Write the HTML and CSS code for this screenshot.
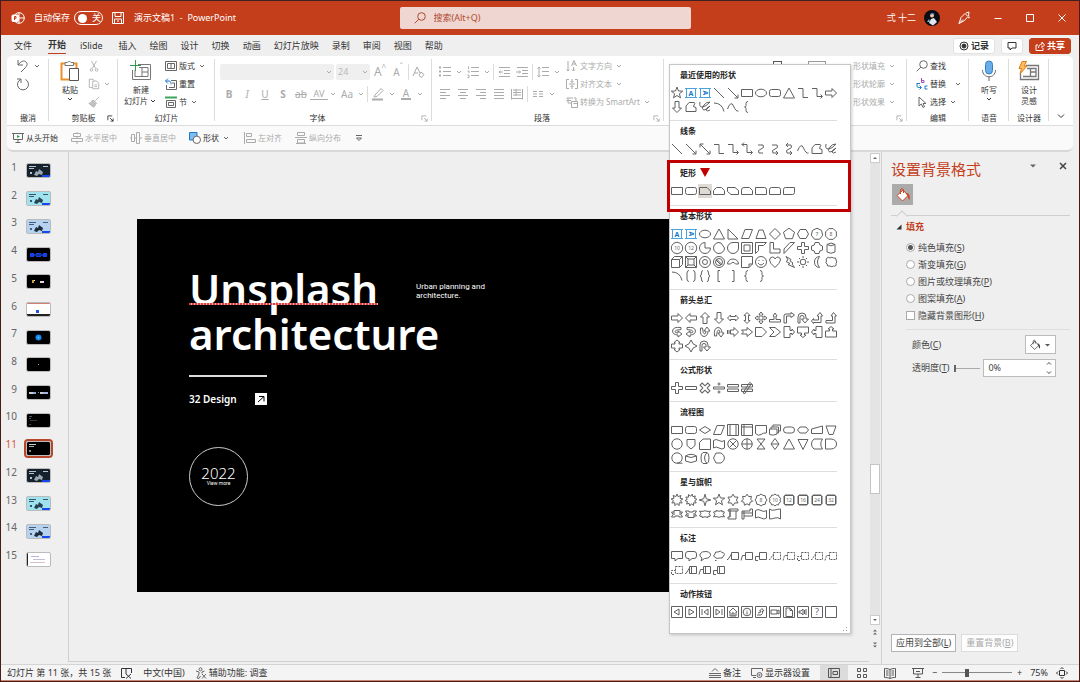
FILE: index.html
```html
<!DOCTYPE html>
<html lang="zh-CN">
<head>
<meta charset="utf-8">
<title>演示文稿1 - PowerPoint</title>
<link rel="stylesheet" href="styles.css">
</head>
<body>
<svg class="sprite" aria-hidden="true">
  <symbol id="caret" viewBox="0 0 8 8"><path d="M2 3l2 2 2-2"/></symbol>
  <symbol id="undo" viewBox="0 0 14 14"><path d="M2 1v5h5M2 6C5 2 8 1 10 3c2 2 1 4-1 6l-4 4"/></symbol>
  <symbol id="redo" viewBox="0 0 14 14"><path d="M1 2h4v4M4.500 2.500A5.500 5.500 0 1 0 9.500 2.500"/></symbol>
  <symbol id="paste" viewBox="0 0 20 22"><path d="M6 3.500H1.500V19.500H9M13.500 3.500H16.500V8" stroke="#e8912d" stroke-width="2"/><path d="M5 2.500H7.500A2 2 0 0 1 11 2.500H13.500V5.500H5Z" fill="#fff" stroke="#777"/><path d="M9.500 8.500H18.500V20.500H9.500Z" fill="#fff" stroke="#555"/></symbol>
  <symbol id="cut" viewBox="0 0 14 14"><path d="M4 1l5 9M10 1l-5 9"/><circle cx="4" cy="11.500" r="1.500"/><circle cx="10" cy="11.500" r="1.500"/></symbol>
  <symbol id="copy" viewBox="0 0 14 14"><path d="M5 11H1.500V1.500H6L7 3M5.500 3.500H10L12.500 6V12.500H5.500ZM7.500 8h3M7.500 10h3"/></symbol>
  <symbol id="brush" viewBox="0 0 14 14"><path d="M13 1L8.500 5.500M6 4.500L10 8.500 8.500 10 4.500 6ZM4.500 6C4 7.500 3 8 1 8.500L6.500 13C8 12.500 8.500 11 8.500 10M3 10l2-1M5 12l1.500-2" fill="#ccc"/></symbol>
  <symbol id="newslide" viewBox="0 0 22 22"><path d="M8 4.500H20.500V19.500H2.500V10M5 16.500H18V7.500H9M5 10V17M12 7.500V16.500M12 12H18" stroke="#777"/><path d="M5.500 0V11M0 5.500H11" stroke="#2c9b50"/></symbol>
  <symbol id="layout" viewBox="0 0 12 12"><path d="M.5 1.500H11.500V10.500H.5ZM2.500 3.500H9.500V8.500H2.500ZM6 3.500V8.500"/></symbol>
  <symbol id="reset" viewBox="0 0 12 12"><path d="M6 2.500H11.500V11.500H1.500V7M4 9.500H9.500V5H7"/><path d="M3 .5L.5 3 3 5.500M.5 3H4C6 3 6 5 6 6.500" stroke="#1c78c8"/></symbol>
  <symbol id="section" viewBox="0 0 12 12"><path d="M1.500 4.500H10.500V11.500H1.500ZM3.500 6.500H8.500V9.500H3.500Z"/><path d="M0 1.500H12" stroke="#3ca55c" stroke-width="2"/></symbol>
  <symbol id="launch" viewBox="0 0 8 8"><path d="M1 6V1H6M3.500 3.500L7 7M7 4V7H4"/></symbol>
  <symbol id="clear" viewBox="0 0 14 14"><path d="M1 11L5 2 8 8M2.500 8H6M9 7L12 9.500 9.500 12.500 7 10.500Z"/></symbol>
  <symbol id="pen" viewBox="0 0 14 14"><path d="M4 8L10 1.500 12 3.500 6 9.500 3 10Z"/><path d="M1 12.500H12" stroke-width="2"/></symbol>
  <symbol id="bullets" viewBox="0 0 12 12"><path d="M4 1.500H12M4 5.500H12M4 9.500H12"/><path d="M0 1.500H2M0 5.500H2M0 9.500H2" stroke-width="2"/></symbol>
  <symbol id="numbers" viewBox="0 0 12 12"><path d="M4 1.500H12M4 5.500H12M4 9.500H12M1.500 .5V3M.5 5H2V7M.5 9H2V11.500H.5"/></symbol>
  <symbol id="outdent" viewBox="0 0 12 12"><path d="M1 1.500H12M6 4.500H12M6 7.500H12M1 10.500H12M5 6H1M2.500 4.500L1 6 2.500 7.500"/></symbol>
  <symbol id="indent" viewBox="0 0 12 12"><path d="M1 1.500H12M6 4.500H12M6 7.500H12M1 10.500H12M0 6H4.500M3 4.500L4.500 6 3 7.500"/></symbol>
  <symbol id="spacing" viewBox="0 0 12 12"><path d="M5 1.500H12M5 5.500H12M5 9.500H12M2 1V11M.5 2.500L2 1 3.500 2.500M.5 9.500L2 11 3.500 9.500"/></symbol>
  <symbol id="al" viewBox="0 0 12 12"><path d="M1 1.500H11M1 4.500H7M1 7.500H11M1 10.500H7"/></symbol>
  <symbol id="ac" viewBox="0 0 12 12"><path d="M1 1.500H11M3 4.500H9M1 7.500H11M3 10.500H9"/></symbol>
  <symbol id="ar" viewBox="0 0 12 12"><path d="M1 1.500H11M5 4.500H11M1 7.500H11M5 10.500H11"/></symbol>
  <symbol id="aj" viewBox="0 0 12 12"><path d="M1 1.500H11M1 4.500H11M1 7.500H11M1 10.500H11"/></symbol>
  <symbol id="ad" viewBox="0 0 12 12"><path d="M.5 1V11.500M11.500 1V11.500M.5 10.500H11.500M2 2H10M2 4.500H10M2 7H10M5 1V8"/></symbol>
  <symbol id="cols" viewBox="0 0 12 12"><path d="M1 3.500H5M1 6H5M1 8.500H5M7 3.500H11M7 6H11M7 8.500H11"/></symbol>
  <symbol id="tdir" viewBox="0 0 12 12"><path d="M2 1V11M.5 9.500L2 11 3.500 9.500M7.500 11V7M6 9.500L7.500 11 9 9.500M5.500 6L8 .5 10.500 6M6.500 4H9.500"/></symbol>
  <symbol id="talign" viewBox="0 0 12 12"><path d="M3 1.500H.5V10.500H3M9 1.500H11.500V10.500H9M3 6H9M6 1V4.500M6 7.500V11M4.500 3L6 4.500 7.500 3M4.500 9L6 7.500 7.500 9"/></symbol>
  <symbol id="smart" viewBox="0 0 12 12"><path d="M.5 2H7M.5 4.500H5M2 2V7H5M5.500 5.500H11.500V11.500H5.500ZM7.500 7.500H11.500M8 2H10V5"/></symbol>
  <symbol id="find" viewBox="0 0 12 12"><circle cx="7.500" cy="4.500" r="3.800"/><path d="M4.800 7.200L.7 11.300"/></symbol>
  <symbol id="replace" viewBox="0 0 12 12"><path d="M5.500 0V4.500M5.500 2.500H8V4.500H5.500" stroke="#a54bc0"/><path d="M11.500 8H9V11H11.500M1 5V8C1 9.500 2 9.500 5 9.500M3.500 7.500L5.500 9.500 3.500 11.500M4 5.500H1" stroke="#1c78c8"/></symbol>
  <symbol id="select" viewBox="0 0 12 12"><path d="M3 1V10L5.300 8 7 11.500 8.500 10.800 7 7.500H10Z"/></symbol>
  <symbol id="mic" viewBox="0 0 16 22"><rect x="4.500" y="1" width="7" height="13" rx="3.500" fill="#69aee8" stroke="#2f7fc4"/><path d="M1.500 10C1.500 19 14.500 19 14.500 10M8 17V21" stroke="#666"/></symbol>
  <symbol id="ideas" viewBox="0 0 22 20"><path d="M8 4.500H20.500V18.500H2.500V13M9 7.500H18V15.500H5M12.500 7.500V15.500M12.500 11H18" stroke="#777" stroke-width="1.300"/><path d="M4 .5H8.500L6 5H9L2 13 3.500 7.500H1Z" fill="#f9bf62" stroke="#e07b12"/></symbol>
  <symbol id="play" viewBox="0 0 12 12"><path d="M0 1.500H12M1.500 1.500V7.500H10.500V1.500M6 7.500V11M3.500 10.500H8.500"/><path d="M5 3L8 4.500 5 6Z" fill="#2c9b50" stroke="none"/></symbol>
  <symbol id="hc" viewBox="0 0 12 12"><path d="M6 0V1.500M2.500 1.500H9.500V4.500H2.500ZM6 4.500V6.500M.5 6.500H11.500V9.500H.5ZM6 9.500V12"/></symbol>
  <symbol id="vc" viewBox="0 0 12 12"><path d="M0 6H1.500M1.500 2.500H4.500V9.500H1.500ZM4.500 6H6.500M6.500 .5H9.500V11.500H6.500ZM9.500 6H12"/></symbol>
  <symbol id="shapes" viewBox="0 0 12 12"><path d="M.5 .5H8V8H.5Z" fill="#80bdec" stroke="#1c78c8"/><circle cx="7.800" cy="7.800" r="3.700" fill="#fff"/></symbol>
  <symbol id="left" viewBox="0 0 12 12"><path d="M.5 0V12M2.500 1.500H7.500V4.500H2.500ZM2.500 7.500H11.500V10.500H2.500Z"/></symbol>
  <symbol id="dist" viewBox="0 0 12 12"><path d="M0 5.500H12M2.500 .5H9.500V3.500H2.500ZM2.500 7.500H9.500V11H2.500ZM1 11.500H11"/></symbol>
  <symbol id="bucket" viewBox="0 0 16 16"><path d="M2 8.500L8 3 13 8.500 7.500 14Z" fill="#fff"/><path d="M5.500 7V2.500Q7 .5 8.500 2.500V6"/><path d="M12 6C14 6.500 15.500 9 14.500 13 13 12 13 9 11 6Z" class="drop"/></symbol>
  <symbol id="book" viewBox="0 0 12 12"><path d="M6 2.500C4 1.500 2 1.500 .5 1.500V10.500C2 10.500 4 10.500 6 11.500 8 10.500 10 10.500 11.500 10.500V1.500C10 1.500 8 1.500 6 2.500V11M2 4H4.500M2 6H4.500M2 8H4.500M7.500 4H10M7.500 6H10M7.500 8H10"/></symbol>
  <symbol id="spell" viewBox="0 0 12 12"><path d="M5 1.500H.5V10.500H4M5 1.500V7M5 1.500H10.500V6M5 7L10 11.500M10 7L5 11.500"/></symbol>
  <symbol id="access" viewBox="0 0 12 12"><path d="M1 4L4 5V7L2 11 4 11.500 5.500 9M9.500 4L7 5V6.500M7 7L11 11.500M11 7L7 11.500"/><circle cx="5.500" cy="2.300" r="1.500"/></symbol>
  <symbol id="notes" viewBox="0 0 12 12"><path d="M3 4.500L6 1.500 9 4.500M0 6.500H12M0 8.500H12M0 10.500H12"/></symbol>
  <symbol id="display" viewBox="0 0 12 12"><path d="M5 8.500H.5V1.500H11.500V4M2 10.500H5"/><circle cx="8.500" cy="8" r="2.500"/><circle cx="8.500" cy="8" r=".7"/></symbol>
  <symbol id="normal" viewBox="0 0 12 12"><path d="M.5 1.500H11.500V10.500H.5ZM3 1.500V10.500M5 4.500H9.500V7.500H5Z"/></symbol>
  <symbol id="sorter" viewBox="0 0 12 12"><path d="M1.500 1.500H4.500V4.500H1.500ZM7.500 1.500H10.500V4.500H7.500ZM1.500 7.500H4.500V10.500H1.500ZM7.500 7.500H10.500V10.500H7.500Z"/></symbol>
  <symbol id="show" viewBox="0 0 12 12"><path d="M0 1.500H12M1.500 1.500V7H10.500V1.500M4 4.500H8M6 7V11M3.500 10.500H8.500"/></symbol>
  <symbol id="fit" viewBox="0 0 12 12"><path d="M3.500 3.500H8.500V8.500H3.500ZM4.500 2L6 .5 7.500 2M4.500 10L6 11.500 7.500 10M2 4.500L.5 6 2 7.500M10 4.500L11.500 6 10 7.500"/></symbol>
</svg>

<div class="app">
  <header class="titlebar">
    <div class="title-left">
      <svg class="i14" viewBox="0 0 14 14"><circle cx="8" cy="7" r="5.300"/><path d="M8 1.700V12.300M8 7H13.300"/><rect x="1" y="4" width="6.500" height="6.500" rx="1" fill="#fff"/><path d="M3.500 9V5.500H5V7.300H3.500" stroke="#c43e1c"/></svg>
      <span>自动保存</span>
      <button class="toggle"><i></i>关</button>
      <svg class="i12" viewBox="0 0 12 12"><path d="M.5 .5H11.500V11.500H.5ZM3 .5V4.500H9V.5M2.500 11.500V7H9.500V11.500M5 9H7"/></svg>
      <span class="doc">演示文稿1&nbsp; -&nbsp; PowerPoint</span>
    </div>
    <label class="search"><svg class="i12"><use href="#find"/></svg><input type="text" aria-label="搜索" placeholder="搜索(Alt+Q)"></label>
    <div class="title-right">
      <span>弍 十二</span>
      <svg class="avatar" viewBox="0 0 16 16"><circle cx="8" cy="8" r="8" fill="#0b0d12" stroke="none"/><path d="M5 13L7 9 10 8 13 12 9 15.500Z" fill="#dfe8ee" stroke="none"/><circle cx="8" cy="5.500" r="2" fill="#f0c9b4" stroke="none"/><path d="M6 5C7 2 10 2 10.500 5L9 4Z" fill="#3f7fb5" stroke="none"/><path d="M3 12l2-3 1 3z" fill="#7fb5d4" stroke="none"/></svg>
      <svg class="i14" viewBox="0 0 14 14"><path d="M2 12.500L4 6.500 8 2.500 11 5.500 7.500 9.500ZM2 12.500L6 8.500M9 2L12 1 11.500 5M11 7L13 6"/></svg>
      <button aria-label="最小化"><svg class="i10" viewBox="0 0 10 10"><path d="M1.500 5.500H8.500"/></svg></button>
      <button aria-label="最大化"><svg class="i10" viewBox="0 0 10 10"><path d="M1.500 1.500H8.500V8.500H1.500Z"/></svg></button>
      <button aria-label="关闭"><svg class="i10" viewBox="0 0 10 10"><path d="M1.500 1.500L8.500 8.500M8.500 1.500L1.500 8.500"/></svg></button>
    </div>
  </header>

  <nav class="tabs">
    <button class="file">文件</button><button class="on">开始</button><button class="islide">iSlide</button><button>插入</button><button>绘图</button><button>设计</button><button>切换</button><button>动画</button><button>幻灯片放映</button><button>录制</button><button>审阅</button><button>视图</button><button>帮助</button>
    <div class="tab-actions">
      <button class="pill"><svg class="i10" viewBox="0 0 10 10"><circle cx="5" cy="5" r="4"/><circle cx="5" cy="5" r="2" fill="#333"/></svg>记录</button>
      <button class="pill" aria-label="批注"><svg class="i10" viewBox="0 0 10 10"><path d="M1 1.500H9V7H5L3 9V7H1Z"/></svg></button>
      <button class="pill share"><svg class="i10" viewBox="0 0 10 10"><path d="M3 4H1V9.500H8V7M3.500 7C3.500 4.500 5 3 7 3V1L9.500 4 7 6.500V4.500"/></svg>共享</button>
    </div>
  </nav>

  <section class="ribbon">
    <div class="group undo">
      <div class="content stack wide">
        <button class="row"><svg class="i14"><use href="#undo"/></svg><svg class="caret"><use href="#caret"/></svg></button>
        <button class="row"><svg class="i14"><use href="#redo"/></svg></button>
      </div>
      <h2>撤消</h2>
    </div>
    <div class="group clip">
      <div class="content">
        <button class="big"><svg class="i22"><use href="#paste"/></svg>粘贴<svg class="caret"><use href="#caret"/></svg></button>
        <div class="stack off">
          <button class="row" aria-label="剪切"><svg class="i12"><use href="#cut"/></svg></button>
          <button class="row" aria-label="复制"><svg class="i12"><use href="#copy"/></svg><svg class="caret"><use href="#caret"/></svg></button>
          <button class="row" aria-label="格式刷"><svg class="i12"><use href="#brush"/></svg></button>
        </div>
      </div>
      <h2>剪贴板</h2><svg class="launch"><use href="#launch"/></svg>
    </div>
    <div class="group slides">
      <div class="content">
        <button class="big"><svg class="i22"><use href="#newslide"/></svg>新建<span>幻灯片<svg class="caret"><use href="#caret"/></svg></span></button>
        <div class="stack">
          <button class="row"><svg class="i12"><use href="#layout"/></svg>版式<svg class="caret"><use href="#caret"/></svg></button>
          <button class="row"><svg class="i12"><use href="#reset"/></svg>重置</button>
          <button class="row"><svg class="i12"><use href="#section"/></svg>节<svg class="caret"><use href="#caret"/></svg></button>
        </div>
      </div>
      <h2>幻灯片</h2>
    </div>
    <div class="group font">
      <div class="content tools off">
        <div class="line">
          <span class="combo name"><select aria-label="字体"><option></option></select><svg class="caret"><use href="#caret"/></svg></span>
          <span class="combo size"><select aria-label="字号"><option>24</option></select><svg class="caret"><use href="#caret"/></svg></span>
          <button class="t g">A<sup>^</sup></button><button class="t">A<sup>ˇ</sup></button><i class="sep"></i><button class="t"><svg class="i14"><use href="#clear"/></svg></button>
        </div>
        <div class="line">
          <button class="t"><b>B</b></button><button class="t"><em>I</em></button><button class="t"><u>U</u></button><button class="t"><b>S</b></button><button class="t"><s>ab</s></button><button class="t av">AV</button><svg class="caret"><use href="#caret"/></svg><button class="t">Aa</button><svg class="caret"><use href="#caret"/></svg><i class="sep"></i><button class="t"><svg class="i14"><use href="#pen"/></svg></button><svg class="caret"><use href="#caret"/></svg><button class="t"><span class="ink">A</span></button><svg class="caret"><use href="#caret"/></svg>
        </div>
      </div>
      <h2>字体</h2><svg class="launch dim"><use href="#launch"/></svg>
    </div>
    <div class="group para">
      <div class="content off">
        <div class="tools">
          <div class="line">
            <button class="t"><svg class="i12"><use href="#bullets"/></svg></button><svg class="caret"><use href="#caret"/></svg><button class="t"><svg class="i12"><use href="#numbers"/></svg></button><svg class="caret"><use href="#caret"/></svg><i class="sep"></i><button class="t"><svg class="i12"><use href="#outdent"/></svg></button><button class="t"><svg class="i12"><use href="#indent"/></svg></button><i class="sep"></i><button class="t"><svg class="i12"><use href="#spacing"/></svg></button><svg class="caret"><use href="#caret"/></svg>
          </div>
          <div class="line">
            <button class="t"><svg class="i12"><use href="#al"/></svg></button><button class="t"><svg class="i12"><use href="#ac"/></svg></button><button class="t"><svg class="i12"><use href="#ar"/></svg></button><button class="t"><svg class="i12"><use href="#aj"/></svg></button><button class="t"><svg class="i12"><use href="#ad"/></svg></button><i class="sep"></i><button class="t"><svg class="i12"><use href="#cols"/></svg></button><svg class="caret"><use href="#caret"/></svg>
          </div>
        </div>
        <div class="stack">
          <button class="row"><svg class="i12"><use href="#tdir"/></svg>文字方向<svg class="caret"><use href="#caret"/></svg></button>
          <button class="row"><svg class="i12"><use href="#talign"/></svg>对齐文本<svg class="caret"><use href="#caret"/></svg></button>
          <button class="row"><svg class="i12"><use href="#smart"/></svg>转换为 SmartArt<svg class="caret"><use href="#caret"/></svg></button>
        </div>
      </div>
      <h2>段落</h2><svg class="launch dim"><use href="#launch"/></svg>
    </div>
    <div class="group draw">
      <div class="content off">
        <div class="peek"><i></i><i></i></div>
        <div class="stack">
          <button class="row">形状填充<svg class="caret"><use href="#caret"/></svg></button>
          <button class="row">形状轮廓<svg class="caret"><use href="#caret"/></svg></button>
          <button class="row">形状效果<svg class="caret"><use href="#caret"/></svg></button>
        </div>
      </div>
      <svg class="launch dim"><use href="#launch"/></svg>
    </div>
    <div class="group edit">
      <div class="content stack wide">
        <button class="row"><svg class="i12"><use href="#find"/></svg>查找</button>
        <button class="row"><svg class="i12"><use href="#replace"/></svg>替换<svg class="caret far"><use href="#caret"/></svg></button>
        <button class="row"><svg class="i12"><use href="#select"/></svg>选择<svg class="caret"><use href="#caret"/></svg></button>
      </div>
      <h2>编辑</h2>
    </div>
    <div class="group voice">
      <div class="content"><button class="big"><svg class="i22"><use href="#mic"/></svg>听写<svg class="caret"><use href="#caret"/></svg></button></div>
      <h2>语音</h2>
    </div>
    <div class="group designer">
      <div class="content"><button class="big"><svg class="i22"><use href="#ideas"/></svg>设计<span>灵感</span></button></div>
      <h2>设计器</h2>
    </div>
    <button class="collapse" aria-label="折叠功能区"><svg class="i10" viewBox="0 0 10 10"><path d="M2 3.500L5 6.500 8 3.500"/></svg></button>
  </section>

  <section class="quick">
    <button class="row"><svg class="i12"><use href="#play"/></svg>从头开始</button>
    <button class="row off"><svg class="i12"><use href="#hc"/></svg>水平居中</button>
    <button class="row off"><svg class="i12"><use href="#vc"/></svg>垂直居中</button>
    <button class="row"><svg class="i12"><use href="#shapes"/></svg>形状<svg class="caret"><use href="#caret"/></svg></button>
    <button class="row off"><svg class="i12"><use href="#left"/></svg>左对齐</button>
    <button class="row off"><svg class="i12"><use href="#dist"/></svg>纵向分布</button>
    <button class="row" aria-label="自定义"><svg class="caret" viewBox="0 0 8 8"><path d="M1 1.500H7M1.500 4H6.500L4 6.500Z"/></svg></button>
  </section>

  <main class="workspace">
    <ol class="thumbs" id="thumbs"></ol>
    <div class="canvas">
      <article class="slide">
        <h1><span class="typo">Unsplash</span><br>architecture</h1>
        <p class="note">Urban planning and<br>architecture.</p>
        <div class="tag">
          <span>32 Design</span>
          <svg class="i12" viewBox="0 0 12 12"><rect x="0" y="0" width="12" height="12" fill="#fff" stroke="none"/><path d="M3 9L9 3.500M4 3.500H9V8.500" stroke="#000"/></svg>
        </div>
        <div class="year">2022<small>View more</small></div>
      </article>
    </div>
    <div class="scroll">
      <button aria-label="向上"><svg viewBox="0 0 8 8"><path d="M2 5L4 3 6 5Z"/></svg></button>
      <div class="track"><i></i></div>
      <button aria-label="向下"><svg viewBox="0 0 8 8"><path d="M2 3L4 5 6 3Z"/></svg></button>
      <button class="flat" aria-label="上一张"><svg viewBox="0 0 8 8"><path d="M2 3.500L4 1.500 6 3.500ZM2 6.500L4 4.500 6 6.500Z"/></svg></button>
      <button class="flat" aria-label="下一张"><svg viewBox="0 0 8 8"><path d="M2 1.500L4 3.500 6 1.500ZM2 4.500L4 6.500 6 4.500Z"/></svg></button>
    </div>
    <aside class="pane">
      <header><h2>设置背景格式</h2><button aria-label="选项"><svg class="i10" viewBox="0 0 10 10"><path d="M2 3.500H8L5 6.500Z" fill="#666" stroke="none"/></svg></button><button aria-label="关闭"><svg class="i10" viewBox="0 0 10 10"><path d="M2 2L8 8M8 2L2 8" stroke-width="1.500"/></svg></button></header>
      <button class="fill-tab" aria-label="填充"><svg class="i16"><use href="#bucket"/></svg></button>
      <div class="notch"></div>
      <h3><svg class="i10" viewBox="0 0 10 10"><path d="M7.500 2.500V7.500H2.500Z" fill="#333" stroke="none"/></svg>填充</h3>
      <form>
        <label class="opt"><input type="radio" name="fill" checked><span>纯色填充(<u>S</u>)</span></label>
        <label class="opt"><input type="radio" name="fill"><span>渐变填充(<u>G</u>)</span></label>
        <label class="opt"><input type="radio" name="fill"><span>图片或纹理填充(<u>P</u>)</span></label>
        <label class="opt"><input type="radio" name="fill"><span>图案填充(<u>A</u>)</span></label>
        <label class="opt"><input type="checkbox"><span>隐藏背景图形(<u>H</u>)</span></label>
        <div class="field color"><span>颜色(<u>C</u>)</span><button type="button" aria-label="颜色"><svg class="i12"><use href="#bucket"/></svg><svg class="i10" viewBox="0 0 10 10"><path d="M3 4H8L5.500 6.500Z" fill="#555" stroke="none"/></svg></button></div>
        <div class="field"><label for="op">透明度(<u>T</u>)</label><input class="fade" type="range" value="0" aria-label="透明度"><span class="spin"><input id="op" type="text" value="0%"><svg viewBox="0 0 6 16"><path d="M1 4.500L3 2.500 5 4.500M1 11.500L3 13.500 5 11.500"/></svg></span></div>
      </form>
      <footer><button>应用到全部(<u>L</u>)</button><button disabled>重置背景(<u>B</u>)</button></footer>
    </aside>
  </main>

  <footer class="status">
    <span>幻灯片 第 11 张，共 15 张</span>
    <svg class="i12"><use href="#spell"/></svg>
    <span>中文(中国)</span>
    <span class="row"><svg class="i12"><use href="#access"/></svg>辅助功能: 调查</span>
    <span class="grow"></span>
    <button class="row"><svg class="i12"><use href="#notes"/></svg>备注</button>
    <button class="row"><svg class="i12"><use href="#display"/></svg>显示器设置</button>
    <div class="views">
      <button class="on" aria-label="普通"><svg class="i12"><use href="#normal"/></svg></button><button aria-label="浏览"><svg class="i12"><use href="#sorter"/></svg></button><button aria-label="阅读"><svg class="i12"><use href="#book"/></svg></button><button aria-label="放映"><svg class="i12"><use href="#show"/></svg></button>
    </div>
    <div class="zoom"><button>−</button><input type="range" min="0" max="100" value="35" aria-label="缩放"><button>+</button><span>75%</span><svg class="i12"><use href="#fit"/></svg></div>
  </footer>

  <div class="gallery" id="gallery"></div>
</div>
<script src="shapes.js"></script>
</body>
</html>
```
FILE: styles.css
```css
*, *::before, *::after { box-sizing: border-box; margin: 0; padding: 0; }
body { font: 8px/12px "Noto Sans", "Noto Sans CJK SC", sans-serif; color: #333; background: #efefef; }
button, input, select { font: inherit; color: inherit; background: none; border: 0; border-radius: 0; outline: 0; appearance: none; }
h1, h2, h3 { font: inherit; }
ol { list-style: none; }
svg { fill: none; stroke: currentColor; stroke-width: 1; flex: none; display: block; }
.sprite { position: absolute; width: 0; height: 0; }
.i10 { width: 10px; height: 10px; }
.i12 { width: 12px; height: 12px; }
.i14 { width: 14px; height: 14px; }
.i16 { width: 16px; height: 16px; }
.i22 { width: 22px; height: 22px; }
.caret { width: 10px; height: 8px; }
.row { display: flex; align-items: center; gap: 2px; white-space: nowrap; }
.row > svg { color: #666; }
.off, .off svg { color: #ababab; }

.app { position: relative; display: flex; flex-direction: column; height: 100vh; min-width: 1080px; border: 1px solid #4a1c16; border-top-color: #3b2024; }

/* title bar */
.titlebar { display: grid; grid-template-columns: 1fr 291px 1fr; align-items: center; height: 34px; padding-left: 10px; background: #c43e1c; color: #fff; }
.title-left, .title-right { display: flex; align-items: center; }
.title-left { font-size: 9px; gap: 9px; }
.title-left .toggle { margin-left: -5px; }
.title-left .doc { margin-left: 1px; }
.toggle { display: flex; align-items: center; gap: 5px; width: 29px; height: 14px; padding: 0 3px; border: 1px solid #fff; border-radius: 7px; }
.toggle i { width: 9px; height: 9px; flex: none; border-radius: 50%; background: #fff; }
.search { display: flex; align-items: center; gap: 8px; height: 22px; padding: 0 14px; border-radius: 2px; background: #efd6d0; color: #b04a30; font-size: 9px; }
.search input { flex: 1; min-width: 0; }
.search input::placeholder { color: #b04a30; }
.title-right { justify-content: flex-end; gap: 22px; padding-right: 12px; font-size: 9px; }
.title-right .avatar { width: 16px; height: 16px; margin: 0 -5px 0 -14px; }

/* tabs */
.tabs { display: flex; align-items: center; gap: 13px; height: 21px; padding: 0 8px 0 13px; font-size: 9px; }
.tabs > button { height: 17px; white-space: nowrap; }
.tabs .file { margin-right: 3px; }
.tabs .islide { margin: 0 3px 0 1px; }
.tabs .on { font-weight: 700; border-bottom: 1px solid #c43e1c; }
.tab-actions { display: flex; gap: 6px; margin-left: auto; }
.pill { display: flex; align-items: center; gap: 2px; height: 16px; padding: 0 5px; border: 1px solid #e2e2e2; border-radius: 3px; background: #fff; font-weight: 700; }
.pill.share { background: #c43e1c; border-color: #c43e1c; color: #fff; }

/* ribbon */
.ribbon { display: flex; height: 70px; margin: 0 6px; border-radius: 5px 5px 0 0; background: #fff; border-bottom: 1px solid #dcdcdc; }
.group { position: relative; display: flex; flex-direction: column; flex: none; padding-top: 1px; }
.group::after { content: ""; position: absolute; right: 0; top: 3px; bottom: 4px; width: 1px; background: #dcdcdc; }
.content { display: flex; height: 54px; }
.group h2 { text-align: center; line-height: 14px; }
.stack { display: flex; flex-direction: column; }
.stack .row { height: 18px; }
.wide { padding-left: 9px; }
.launch { position: absolute; right: 4px; bottom: 3px; width: 7px; height: 7px; }
.dim { color: #ababab; }
.big { display: flex; flex-direction: column; align-items: center; line-height: 11px; padding-top: 3px; }
.big > .i22 { margin-bottom: 2px; }
.big span { display: flex; align-items: center; }
.undo { width: 42px; }
.clip { width: 69px; }
.clip .content { padding-left: 9px; gap: 6px; }
.clip .big, .voice .big { width: 24px; }
.slides { width: 97px; }
.slides .content { padding-left: 6px; gap: 7px; }
.font { width: 217px; }
.font .content { padding-left: 5px; }
.font h2, .para h2 { padding-right: 12px; }
.para { width: 232px; }
.para .content { padding-left: 4px; gap: 4px; }
.draw { flex: 1 1 auto; }
.draw .content { justify-content: flex-end; padding-right: 10px; }
.peek { display: flex; gap: 26px; padding: 4px 27px 0 0; }
.peek i { width: 18px; height: 5px; border: 1px solid #999; }
.peek i:first-child { width: 9px; border-color: #555; }
.edit { width: 62px; }
.voice { width: 40px; }
.designer { width: 40px; }
.voice .content, .designer .content { justify-content: center; }
.far { margin-left: 5px; }
.collapse { width: 24px; align-self: flex-end; padding: 0 7px 4px; }
.tools { padding-top: 4px; flex-direction: column; }
.line { display: flex; align-items: center; height: 22px; }
.t { width: 18px; height: 18px; display: flex; align-items: center; justify-content: center; font-size: 10px; }
.t.g { font-size: 12px; }
.t sup { font-size: 8px; line-height: 8px; align-self: flex-start; }
.t.av { border-bottom: 1px solid #ababab; height: 12px; font-size: 9px; }
.ink { line-height: 10px; border-bottom: 2px solid #ababab; padding: 0 2px; }
.sep { width: 1px; height: 16px; margin: 0 1px; background: #dcdcdc; }
.combo { display: flex; align-items: center; height: 16px; margin-right: 2px; border-radius: 2px; background: #efefef; font-size: 9px; }
.combo select { flex: 1; min-width: 0; padding-left: 2px; color: #b8b8b8; }
.name { width: 114px; }
.size { width: 34px; margin-right: 1px; }

/* customised quick access bar */
.quick { display: flex; align-items: center; gap: 13px; height: 26px; margin: 0 6px; padding: 0 5px; border-radius: 0 0 6px 6px; background: #fafafa; border-bottom: 2px solid #d8d8d8; }

/* workspace */
.workspace { display: flex; flex: 1; min-height: 0; border-bottom: 1px solid #d4d4d4; }
.thumbs { display: grid; grid-auto-rows: 1fr; height: 416px; width: 67px; margin-top: 5px; flex: none; }
.thumbs li { display: grid; grid-template-columns: 16px 29px; gap: 7px; align-items: center; font-size: 10px; color: #666; }
.thumbs b { font-weight: 400; text-align: right; padding-bottom: 8px; }
.thumbs .frame { border: 2px solid transparent; border-radius: 4px; padding: 1px; }
.thumbs .cur { color: #d8593c; }
.thumbs .cur .frame { border-color: #b7472a; }
.thumbs svg { width: 23px; height: 13px; stroke: none; border-radius: 1px; outline: 1px solid #bbb; }
.canvas { flex: 1; display: flex; align-items: center; justify-content: center; border-left: 1px solid #cfcfcf; border-bottom: 1px solid #cfcfcf; margin-bottom: 2px; padding-bottom: 2px; }
.slide { position: relative; width: 83%; aspect-ratio: 16 / 9; padding: 47px 52px; background: #000; color: #fff; }
.slide h1 { font-size: 42px; line-height: 45px; font-weight: 600; }
.typo { position: relative; }
.typo::after { content: ""; position: absolute; left: 0; right: 0; bottom: 12px; height: 2px; background: repeating-linear-gradient(90deg, #e04040 0 2px, #f6b0b0 2px 3px); }
.note { position: absolute; left: 279px; top: 63px; font-family: Roboto, sans-serif; line-height: 9px; }
.tag { display: flex; align-items: center; justify-content: space-between; width: 78px; margin-top: 19px; padding-top: 16px; border-top: 2px solid #ddd; font-size: 10px; font-weight: 600; }
.year { display: flex; flex-direction: column; align-items: center; justify-content: center; width: 59px; height: 59px; margin-top: 42px; border: 1px solid #ccc; border-radius: 50%; font-size: 15px; font-weight: 300; line-height: 14px; }
.year small { font: 5px/6px Roboto, sans-serif; }

.scroll { width: 13px; flex: none; display: flex; flex-direction: column; padding: 1px 1px 13px; border-right: 1px solid #cfcfcf; }
.scroll button { height: 10px; border: 1px solid #ccc; background: #fff; }
.scroll .flat { height: 13px; border: 0; background: none; }
.scroll svg { width: 8px; height: 8px; margin: auto; fill: #666; stroke: none; }
.track { flex: 1; background: #e4e4e4; }
.track i { display: block; height: 30px; margin-top: 301px; border: 1px solid #c4c4c4; background: #fff; }

/* format pane */
.pane { width: 197px; flex: none; display: flex; flex-direction: column; padding: 7px 9px 12px 9px; font-size: 9px; color: #444; }
.pane header { display: flex; align-items: flex-start; gap: 18px; line-height: 20px; }
.pane header h2 { flex: 1; font-size: 15px; color: #c43e1c; }
.pane header button { padding: 2px 0 0; margin-right: 2px; }
.fill-tab { width: 21px; height: 21px; margin-top: 5px; margin-left: 1px; display: grid; place-items: center; background: #ababab; color: #d04423; }
.drop { fill: currentColor; stroke: none; }
.notch { position: relative; height: 11px; border-bottom: 1px solid #cfcfcf; }
.notch::after { content: ""; position: absolute; left: 7px; bottom: -5px; width: 8px; height: 8px; background: #efefef; border: solid #cfcfcf; border-width: 1px 0 0 1px; transform: rotate(45deg); }
.pane h3 { display: flex; align-items: center; gap: 2px; margin: 5px 0 6px 3px; font-weight: 700; color: #c43e1c; }
.pane form { padding-left: 15px; }
.opt { display: flex; align-items: center; gap: 3px; height: 17px; }
.opt input { width: 9px; height: 9px; border: 1px solid #aaa; background: #fff; }
.opt [type=radio] { border-radius: 50%; }
.opt [type=radio]:checked { background: radial-gradient(#555 0 2px, #fff 3px); }
.field { display: flex; align-items: center; height: 22px; margin-right: 14px; padding-left: 6px; }
.color { margin-right: 0; margin-top: 5px; height: 28px; padding-right: 14px; padding-top: 2px; border-top: 1px solid #dedede; justify-content: space-between; }
.color button { display: flex; align-items: center; justify-content: center; gap: 1px; width: 31px; height: 19px; border: 1px solid #bbb; background: #fff; }
.color .drop { fill: #1c78c8; }
.fade { width: 26px; height: 10px; margin: 0 3px 0 5px; background: linear-gradient(#aaa, #aaa) center / 100% 1px no-repeat; }
.fade::-webkit-slider-thumb { appearance: none; width: 2px; height: 7px; background: #666; }
.spin { display: flex; flex: 1; align-items: center; height: 18px; padding: 0 3px 0 4px; border: 1px solid #bbb; background: #fff; }
.spin input { flex: 1; min-width: 0; width: 20px; }
.spin svg { width: 6px; height: 16px; }
.pane footer { display: flex; gap: 5px; margin-top: auto; }
.pane footer button { height: 18px; padding: 0 4px; border: 1px solid #b4b4b4; background: #fdfdfd; white-space: nowrap; }
.pane footer :disabled { color: #aaa; border-color: #dcdcdc; }

/* status bar */
.status { display: flex; align-items: center; height: 16px; padding: 0 11px 0 6px; background: #f4f4f4; border-bottom: 1px solid #c98473; white-space: nowrap; gap: 10px; font-size: 9px; }
.grow { flex: 1; }
.views { display: flex; margin-right: -10px; }
.views button { width: 28px; height: 15px; display: grid; place-items: center; color: #555; }
.views .on { background: #dcdcdc; }
.zoom { display: flex; align-items: center; gap: 5px; }
.zoom input { width: 70px; height: 10px; background: linear-gradient(#888, #888) center / 100% 1px no-repeat; }
.zoom input::-webkit-slider-thumb { appearance: none; width: 4px; height: 8px; background: #555; }
.zoom span { margin: 0 3px; }

/* shape gallery menu */
.gallery { position: absolute; left: 668px; top: 63px; width: 182px; padding-bottom: 13px; border: 1px solid #c6c6c6; background: #fff; box-shadow: 1px 1px 3px #0003; }
.gallery section { position: relative; margin-right: 13px; padding-bottom: 5px; border-bottom: 1px solid #dedede; }
.gallery section:last-of-type { border: 0; padding: 0; }
.gallery h2 { font-weight: 700; line-height: 20px; padding: 0 0 1px 10px; color: #222; }
.cells { display: grid; grid-template-columns: repeat(12, 1fr); width: 166px; margin-bottom: 1px; }
.cells button { height: 14px; display: grid; place-items: center; }
.cells svg { width: 14px; height: 14px; stroke: #606060; }
.cells text { font: 5px "Noto Sans", sans-serif; fill: #666; stroke: none; text-anchor: middle; }
.cells .ask text { font-size: 9px; }
.cells .blue { stroke: #4aa3dc; }
.cells .blue text { font-size: 7px; font-weight: 700; fill: #1c78c8; }
.cells .dash { stroke-dasharray: 2 1; }
.cells .hot { background: #dedad4; }
.gallery .marked { padding-bottom: 6px; }
.marked::before { content: ""; position: absolute; left: -3px; right: -14px; top: -3px; height: 52px; border: 3px solid #c00000; }
.marked::after { content: ""; position: absolute; left: 30px; top: 5px; border: 5px solid transparent; border-top: 9px solid #c00000; border-bottom: 0; }
.gallery .marked + section h2 { position: relative; }
.grip { position: absolute; right: 2px; bottom: 1px; width: 6px; height: 6px; stroke: #999; }
```
FILE: shapes.js
```js
// Outlines on a 14 x 14 grid.
const poly = (n, r, turn = 0, inner = 0) => {
  const count = inner ? n * 2 : n;
  const pts = [];
  for (let k = 0; k < count; k++) {
    const a = (Math.PI * 2 * k) / count - Math.PI / 2 + turn;
    const q = inner && k % 2 ? inner : r;
    pts.push((7 + q * Math.cos(a)).toFixed(2) + ' ' + (7 + q * Math.sin(a)).toFixed(2));
  }
  return 'M' + pts.join('L') + 'Z';
};
const circ = (r, cx = 7, cy = 7, ry = r) =>
  `M${cx - r} ${cy}a${r} ${ry} 0 1 0 ${2 * r} 0a${r} ${ry} 0 1 0 ${-2 * r} 0Z`;
const box = 'M1.500 3.500H12.500V10.500H1.500Z';
const sq = 'M1.500 1.500H12.500V12.500H1.500Z';
const round = 'M3.500 3.500H10.500Q12.500 3.500 12.500 5.500V8.500Q12.500 10.500 10.500 10.500H3.500Q1.500 10.500 1.500 8.500V5.500Q1.500 3.500 3.500 3.500Z';
const txt = (d, t, cls = '') => ({ d, t, cls });
const frame = 'M2.500 2.500H11.500V11.500H2.500ZM1 2.500H4M1 11.500H4M10 2.500H13M10 11.500H13';
const A = { d: frame, t: 'A', cls: 'blue' };
const V = { d: frame, t: 'A', cls: 'blue', turn: 90 };
const line = 'M2 2L12 12';
const arrow = line + 'M12 8.500V12H8.500';
const elbow = 'M2 2.500H7V11.500H12';
const elbowArrow = 'M2 2.500H7V10.500H12M10.500 8.500L12.500 10.500 10.500 12.500';
const right = 'M1.500 5H8V2.500L12.500 7 8 11.500V9H1.500Z';
const left = 'M12.500 5H6V2.500L1.500 7 6 11.500V9H12.500Z';
const up = 'M5 12.500V6H2.500L7 1.500 11.500 6H9V12.500Z';
const down = 'M5 1.500V8H2.500L7 12.500 11.500 8H9V1.500Z';
const free = 'M2 11.500V6L5 2.500H10Q12 3 10 5 8 7 12 7.500V11.500Z';
const scrib = 'M2 2Q1 7 4 7 8 7 12 2 8 2 6 5 3 9 6 10 9 10 12 6 8 8 8 10 9 12 12 10';
const arc = 'M2 3Q10 3 12 11.500';
const curve = 'M1.500 9Q5 0 7.500 6T12.500 11';
const lb = 'M8 1.500Q6 1.500 6 3.500V5.500Q6 7 4.500 7 6 7 6 8.500V10.500Q6 12.500 8 12.500';
const rb = 'M6 1.500Q8 1.500 8 3.500V5.500Q8 7 9.500 7 8 7 8 8.500V10.500Q8 12.500 6 12.500';
const tri = 'M7 2L12.500 12H1.500Z';
const plus = 'M5.500 1.500H8.500V5.500H12.500V8.500H8.500V12.500H5.500V8.500H1.500V5.500H5.500Z';
const star5 = poly(5, 6, 0, 2.500);
const bent = 'M2 12V5Q2 3 4 3H9V1.500L12.500 4 9 6.500V5H4.500V12Z';
const uturn = 'M2 12V6Q2 2 6 2T10 6V8H12.500L9 12 5.500 8H8V6Q8 4.500 6 4.500T4 6V12Z';
const wave = 'M1.500 3.500Q4 1.500 7 3.500T12.500 3.500V11Q10 13 7 11T1.500 11Z';
const curved = 'M11 2.500Q3 1.500 2.500 6 3 10 8 10V12L12 9 8 6V8Q5 8 5 6.500T11 4.500Z';
const ribbon = 'M1.500 4H5V5H9V4H12.500L11 6.500 12.500 9H10V10.500H4V9H1.500L3 6.500ZM4 9V6M10 9V6';
const curl = 'M1.500 5Q3 4 4 5V3.500Q7 5 10 3.500V5Q11 4 12.500 5L11 7.500 12.500 10Q11 9 10 10V9.500Q7 11 4 9.500V10Q3 9 1.500 10L3 7.500Z';
const gear = n => poly(n, 6, 0, 5);
const lineBox = 'M5.500 3.500H12.500V10.500H5.500Z';
const calls = ['M1 10.500H2L5.500 5', 'M1 11.500L2.500 6.500H5.500', 'M4 11.500H1.500V7.500H5.500'];
const flip = (d, rot) => ({ d, rot });

const sections = [
  ['最近使用的形状', [star5, A, V, line, arrow, box, circ(5.500, 7, 7, 3.800), round, tri, elbow, elbowArrow, right, down, free, scrib, arc, curve, lb]],
  ['线条', [line, arrow, arrow + 'M2 5.500V2H5.500', elbow, elbowArrow, elbowArrow + 'M4 .5L2 2.500 4 4.500', 'M4 3H9Q11 6 7 7 3 8 5 11H9', 'M4 3H9Q11 6 7 7 3 8 5 11H9M8 9L10 11 8 13', 'M4 3H9Q11 6 7 7 3 8 5 11H9M8 9L10 11 8 13M6 1L4 3 6 5', curve, free, scrib]],
  ['矩形', [box, round, { d: 'M1.500 3.500H9L12.500 7V10.500H1.500Z', hot: 1 }, 'M4.500 3.500H9.500L12.500 6.500V10.500H1.500V6.500Z', 'M1.500 3.500H9L12.500 6.500V10.500H5L1.500 7.500Z', 'M4 3.500H9.500L12.500 6.500V10.500H1.500V6Q1.500 3.500 4 3.500Z', 'M1.500 3.500H10.500Q12.500 3.500 12.500 5.500V10.500H1.500Z', 'M3.500 3.500H10.500Q12.500 3.500 12.500 5.500V10.500H1.500V5.500Q1.500 3.500 3.500 3.500Z', 'M3.500 3.500H12.500V8.500Q12.500 10.500 10.500 10.500H1.500V5.500Q1.500 3.500 3.500 3.500Z']],
  ['基本形状', [A, V, circ(5.500, 7, 7, 3.800), tri, 'M2 2L12 12H2Z', 'M5 2.500H12.500L9 11.500H1.500Z', 'M5 3H9L12 11.500H2Z', poly(4, 5.500), poly(5, 5.800), 'M4 2.500H10L12.500 7 10 11.500H4L1.500 7Z', txt(poly(7, 5.800), '7'), txt(poly(8, 5.800, .39), '8'),
    txt(poly(10, 5.800), '10'), txt(poly(12, 5.800), '12'), 'M7 1.500A5.500 5.500 0 1 0 12.500 7H7Z', 'M7 1.500A5.500 5.500 0 1 0 12.500 7L9 2Z', 'M12.500 1.500V7A5.500 5.500 0 1 1 7 1.500Z', sq + 'M4 4H10V10H4Z', 'M1.500 1.500H12.500L9.500 4.500H4.500V9.500L1.500 12.500Z', 'M2 1.500H5.500V8H12V12H2Z', 'M8 1.500H12.500L2 12.500V8Z', plus, 'M5 1.500H9Q9 4.500 12.500 5V9Q9 9 9 12.500H5Q5 9 1.500 9V5Q5 5 5 1.500Z', 'M3 3.500Q7 .5 11 3.500V11Q7 13.500 3 11ZM3 3.500Q7 6 11 3.500',
    'M1.500 4.500H9.500V12.500H1.500ZM1.500 4.500L4.500 1.500H12.500V9.500L9.500 12.500M9.500 4.500L12.500 1.500', sq + 'M4 4H10V10H4ZM1.500 1.500L4 4M12.500 1.500L10 4M1.500 12.500L4 10M12.500 12.500L10 10', circ(5.500) + circ(2.500), circ(5.500) + circ(3.500) + 'M4.500 4L10 9.500M4 5L9 10', 'M1.500 9A5.500 5 0 0 1 12.500 9H9.500Q7 5.500 4.500 9Z', 'M1.500 1.500H12.500V9L9 12.500H1.500ZM9 12.500V9H12.500', circ(5.500) + 'M4 8Q7 12 10 8M5 5V6M9 5V6', 'M7 12.500Q1.500 8 1.500 5 2 2 4.500 2 6.500 2 7 4 8 2 10 2 12.500 2.500 12.500 5 12 8 7 12.500Z', 'M4 1.500L9 4.500 8 6 11 8 10 9 12.500 12.500 6 9.500 8 8.500 4 6.500 6 5Z', circ(2.800) + 'M7 1V3M7 11V13M1 7H3M11 7H13M3 3L4.200 4.200M11 3L9.800 4.200M3 11L4.200 9.800M11 11L9.800 9.800', 'M9.500 1.500Q4.500 2 4.500 7T9.500 12.500Q7.500 10 7.500 7T9.500 1.500Z', 'M3 3Q4.500 1.500 6 3 8 1.500 9.500 3 12.500 2 12 5 13.500 7 12 8.500 12.500 12 9.500 11 8 12.500 6 11 3 12 3 9 1 8 2.500 6 1.500 4 3 3Z',
    arc, 'M5 1.500Q3 1.500 3 4V10Q3 12.500 5 12.500M9 1.500Q11 1.500 11 4V10Q11 12.500 9 12.500', 'M5 1.500Q3.500 1.500 3.500 4T2 7Q3.500 7 3.500 10T5 12.500M9 1.500Q10.500 1.500 10.500 4T12 7Q10.500 7 10.500 10T9 12.500', 'M8 1.500H6V12.500H8', 'M6 1.500H8V12.500H6', lb, rb]],
  ['箭头总汇', [right, left, up, down, 'M1.500 7L4.500 4V5.500H9.500V4L12.500 7 9.500 10V8.500H4.500V10Z', 'M7 1.500L10 4.500H8.500V9.500H10L7 12.500 4 9.500H5.500V4.500H4Z', 'M7 1L9 3.500H8V6H10.500V5L13 7 10.500 9V8H8V10.500H9L7 13 5 10.500H6V8H3.500V9L1 7 3.500 5V6H6V3.500H5Z', 'M7 2L9 5H8V8.500H12.500V11H1.500V8.500H6V5H5Z', bent, uturn, 'M10 1.500L12.500 5H11V11.500H3.500V12.500L1.500 10 3.500 7.500V9H8.500V5H7Z', 'M9.500 1.500L12.500 5H11V12H2V9.500H8.500V5H7Z',
    curved, flip(curved, 'matrix(-1 0 0 1 14 0)'), flip(curved, 'rotate(-90 7 7)'), flip(curved, 'matrix(0 1 1 0 0 0)'), 'M1.500 5V9M3 5V9M4.500 5H8V2.500L12.500 7 8 11.500V9H4.500Z', 'M1.500 5H7V2.500L12.500 7 7 11.500V9H1.500L3.500 7Z', 'M1.500 2.500H8L12.500 7 8 11.500H1.500Z', 'M1.500 2.500H7L12.500 7 7 11.500H1.500L6 7Z', 'M2 1.500H8V5.500H10V4L12.500 7 10 10V8.500H8V12.500H2Z', 'M1.500 2H12.500V8H8.500V10H10L7 12.500 4 10H5.500V8H1.500Z', 'M12 1.500H6V5.500H4V4L1.500 7 4 10V8.500H6V12.500H12Z', 'M1.500 12H12.500V6H8.500V4H10L7 1.500 4 4H5.500V6H1.500Z',
    'M5 4V3.500H4L7 1 10 3.500H9V5H12.500V9H9V10.500H10L7 13 4 10.500H5V9H1.500V5H5Z', poly(4, 6, 0, 3), uturn]],
  ['公式形状', [plus, 'M1.500 5.500H12.500V8.500H1.500Z', { d: plus, rot: 'rotate(45 7 7)' }, 'M1.500 6H12.500V8H1.500Z' + circ(1, 7, 3) + circ(1, 7, 11), 'M1.500 3.500H12.500V6H1.500ZM1.500 8H12.500V10.500H1.500Z', 'M1.500 3.500H12.500V6H1.500ZM1.500 8H12.500V10.500H1.500ZM3 12L9.500 1.500 11.500 2.500 5 12.500Z']],
  ['流程图', [box, round, 'M7 3.500L12.500 7 7 10.500 1.500 7Z', 'M5 2.500H12.500L9 11.500H1.500Z', sq + 'M4 1.500V12.500M10 1.500V12.500', sq + 'M4 1.500V12.500M1.500 4H12.500', 'M1.500 2.500H12.500V10Q9.500 9.500 7 11.500T1.500 10.500Z', 'M1.500 6H9V11Q5 13 1.500 11.500ZM3 6V4H10.500V10H9M5 4V2H12.500V8H10.500', 'M4.500 4H9.500Q12.500 4 12.500 7T9.500 10H4.500Q1.500 10 1.500 7T4.500 4Z', 'M4 4H10L12.500 7 10 10H4L1.500 7Z', 'M1.500 6L12.500 3V10.500H1.500Z', 'M2 3H12L9 11.500H5Z',
    circ(5.200), 'M3 2.500H11V8.500L7 12 3 8.500Z', 'M5 2H12.500V12.500H1.500V5.500Z', wave, circ(5.200) + 'M3.500 3.500L10.500 10.500M10.500 3.500L3.500 10.500', circ(5.200) + 'M7 1.500V12.500M1.500 7H12.500', 'M3 2H11L3 12H11Z', 'M7 1.500L11 7 7 12.500 3 7ZM3 7H11', tri, 'M2 2.500H12L7 12.500Z', 'M4 2H12.500Q9 7 12.500 12H4Q1.500 10 1.500 7T4 2Z', 'M1.500 2H7Q12.500 2.500 12.500 7T7 12H1.500Z',
    circ(5.200) + 'M7 12.200H12.500', 'M1.500 5Q7 1.500 12.500 5V10Q7 13 1.500 10ZM1.500 5Q7 8 12.500 5', 'M5 1.500Q3 2 3 7T5 12.500H9Q11 12 11 7T9 1.500ZM9 1.500Q6.500 4 6.500 7T9 12.500', 'M4 2H9Q12.500 4 12.500 7T9 12H4L1.500 7Z']],
  ['星与旗帜', [poly(9, 6, 0, 3.500), poly(10, 6, .2, 3.800), poly(4, 5.800, 0, 1.800), star5, poly(6, 5.800, 0, 3.400), poly(7, 5.800, 0, 3.800), txt(gear(8), '8'), txt(gear(10), '10'), ...['12', '16', '24', '32'].map(n => txt('M2.500 2.500H11.500V11.500H2.500ZM4 1V2.500M6 1V2.500M8 1V2.500M10 1V2.500M4 11.500V13M6 11.500V13M8 11.500V13M10 11.500V13M1 4H2.500M1 6H2.500M1 8H2.500M1 10H2.500M11.500 4H13M11.500 6H13M11.500 8H13M11.500 10H13', n)),
    flip(ribbon, 'matrix(1 0 0 -1 0 14)'), ribbon, flip(curl, 'matrix(1 0 0 -1 0 14)'), curl, 'M4 2H12V4H10V12H2V10H4ZM4 2Q2 2 2 4H10M4 4V10', 'M2 4H10V2H12.500V9H4V12H2ZM2 6H12.500M4 4V9', wave, 'M1.500 2Q4 4 7 3T12.500 2V12Q10 10 7 11T1.500 12Z']],
  ['标注', ['M1.500 2.500H12.500V9.500H8L5 12V9.500H1.500Z', 'M4 2.500H10Q12.500 2.500 12.500 5V7Q12.500 9.500 10 9.500H8L5 12V9.500H4Q1.500 9.500 1.500 7V5Q1.500 2.500 4 2.500Z', 'M4 9Q1 7.500 2 5 4 2 8 2.500 13 3 12.500 6.500 11 10 6.500 9.500L3 12Z', 'M4 9Q0 7 3 5 3 2 6 3 9 1 10 3.500 14 4 11.500 7 11 10 7 9 6 10 4 9M3 11.500H4.500',
    ...calls.map(c => c + lineBox), ...calls.map(c => ({ d: c + lineBox, cls: 'dash' })), ...calls.map(c => ({ d: c + lineBox, cls: 'dash' })), ...calls.map(c => c + lineBox + 'M7.500 3.500V10.500')].slice(0, 16)],
  ['动作按钮', ['M9 4V10L4 7Z', 'M5 4V10L10 7Z', 'M10 4V10L6 7ZM4 4V10', 'M4 4V10L8 7ZM10 4V10', 'M3 7L7 3 11 7H10V11H4V7ZM6 11V8H8V11', circ(3.800) + 'M7 5V5.500M7 6.500V9.500', 'M3 10H7Q9 9 8.500 6H10L8 3.500 5.500 6H7Q7 8 4 8', 'M3 5H9V9H3ZM9 6L11 5V9L9 8', 'M4 3H8L10.500 5.500V11.500H4ZM8 3V5.500H10.500', 'M3 6H5L7 4V10L5 8H3ZM8.500 5V9M10 4V10', txt('', '?', 'ask'), ''].map(s => (s.t ? { ...s, d: sq } : sq + s))]
];

const cell = s => {
  const o = typeof s === 'string' ? { d: s } : s;
  const spin = o.turn ? ` transform="rotate(${o.turn} 7 7)"` : '';
  const base = o.cls === 'ask' ? 10 : o.cls ? 9.500 : 9;
  const label = o.t ? `<text x="7" y="${base}"${spin}>${o.t}</text>` : '';
  const rot = o.rot ? ` transform="${o.rot}"` : '';
  return `<button${o.hot ? ' class="hot"' : ''}><svg viewBox="0 0 14 14" class="${o.cls || ''}"><path d="${o.d}"${rot}/>${label}</svg></button>`;
};
document.getElementById('gallery').innerHTML = sections.map(([name, list]) =>
  `<section${name === '矩形' ? ' class="marked"' : ''}><h2>${name}</h2><div class="cells">${list.map(cell).join('')}</div></section>`
).join('') + '<svg class="grip" viewBox="0 0 6 6"><path d="M4 1.500H5M1 4.500H2M4 4.500H5"/></svg>';

// Miniature slide previews.
const rect = (x, y, w, h, f) => `<rect x="${x}" y="${y}" width="${w}" height="${h}" fill="${f}"/>`;
const hero = (bg, ink, dark) => rect(0, 0, 23, 13, bg) + rect(2, 2, 7, 1, ink) + rect(2, 4, 5, 1, ink) + rect(3, 8, 2, 2, ink) +
  rect(16, 2, 5, 1, ink) + `<path d="M7 11L9 7 11 8 12 5 16 8 15 11 12 10 10 12Z" fill="${dark}"/>` + rect(15, 11, 8, 2, '#1648f0');
const black = rect(0, 0, 23, 13, '#000');
const art = {
  a: hero('#15222d', '#b9c5cc', '#9aa8b2'),
  b: hero('#9fe3f0', '#3a5560', '#294252'),
  c: hero('#b5d3f0', '#4b5c78', '#1d2b3c'),
  d: black + rect(3, 5, 4, 4, '#1540e8') + rect(9, 5, 5, 4, '#1540e8') + rect(16, 5, 4, 4, '#1540e8') + rect(7, 6, 9, 2, '#1030a0'),
  e: black + rect(5, 5, 2, 3, '#c8a23c') + rect(7, 5, 1, 1, '#fff') + rect(13, 6, 4, 2, '#ddd'),
  f: rect(0, 0, 23, 13, '#fff') + rect(0, 0, 23, 1, '#d08070') + rect(9, 7, 3, 3, '#1c55e8') + rect(0, 11, 23, 2, '#222'),
  g: black + '<circle cx="11.5" cy="6.500" r="3" fill="#1386f0"/><circle cx="11.5" cy="6.500" r="1" fill="#54c0ff"/>',
  h: black + rect(11, 6, 1, 1, '#999'),
  i: black + rect(2, 6, 4, 2, '#ccc') + rect(6, 6, 3, 2, '#8eaadc') + rect(11, 6, 1, 1, '#999') + rect(13, 6, 3, 2, '#ccc') + rect(16, 6, 5, 2, '#9fb5de'),
  j: black + rect(2, 2, 3, 1, '#555') + rect(2, 4, 2, 1, '#555') + rect(3, 6, 7, 1, '#333') + rect(2, 10, 2, 1, '#444'),
  k: black + rect(2, 2, 7, 1, '#ccc') + rect(2, 4, 5, 1, '#aaa') + rect(2, 8, 2, 2, '#888'),
  l: rect(0, 0, 23, 13, '#fff') + rect(4, 3, 8, 1, '#b5b5d8') + rect(6, 6, 12, 1, '#c0c0dd') + rect(3, 9, 15, 1, '#d9c0d0') + rect(0, 0, 1, 13, '#222')
};
document.getElementById('thumbs').innerHTML = [...'abcdefghijkabcl'].map((k, n) =>
  `<li${n === 10 ? ' class="cur"' : ''}><b>${n + 1}</b><span class="frame"><svg viewBox="0 0 23 13">${art[k]}</svg></span></li>`
).join('');
```
